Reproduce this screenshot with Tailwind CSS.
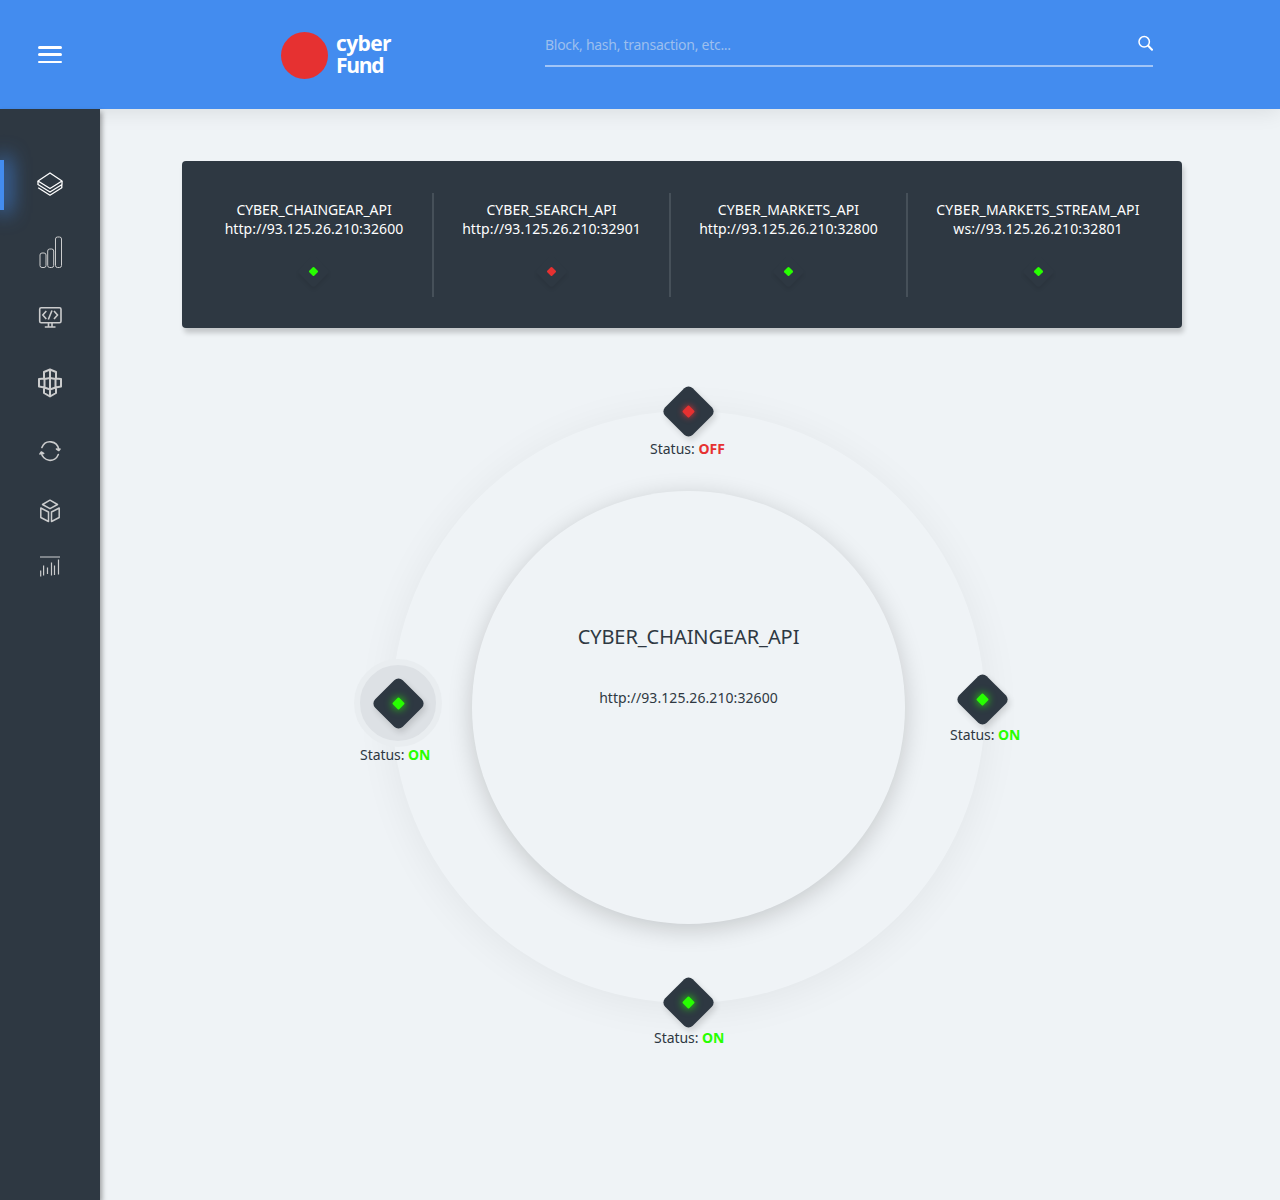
<!DOCTYPE html>
<html lang="en">
<head>
<meta charset="utf-8">
<title>cyber Fund</title>
<script src="https://cdn.jsdelivr.net/npm/@tailwindcss/browser@4"></script>
</head>
<body class="h-[1200px] overflow-hidden bg-[#eff3f6] font-['Noto_Sans',sans-serif] text-sm leading-[19px] text-[#2e3842]">
<header class="relative z-10 flex h-[109px] bg-[#438cef] shadow-[0_3px_20px_rgba(0,0,0,0.09)]">
  <button class="mt-[46px] ml-[38px] flex h-[17px] w-6 flex-col justify-between" aria-label="Menu">
    <span class="h-[2.5px] w-6 rounded-full bg-white"></span>
    <span class="h-[2.5px] w-6 rounded-full bg-white"></span>
    <span class="h-[2.5px] w-6 rounded-full bg-white"></span>
  </button>
  <a class="ml-[219px] flex w-[120px] pt-8">
    <span class="size-[47px] shrink-0 rounded-full bg-[#e63131]"></span>
    <span class="ml-2 font-['Open_Sans',sans-serif] text-[21px] leading-[22px] font-bold text-white"><span class="block tracking-[-0.6px]">cyber</span><span class="block tracking-[-1.3px]">Fund</span></span>
  </a>
  <div class="ml-36 flex h-[67px] w-[608px] justify-between border-b-2 border-[#a1c5f7] pt-[35px] text-[#9cbfee]">
    <span class="tracking-[-0.27px]">Block, hash, transaction, etc...</span>
    <svg class="mr-[-1px] size-4" viewBox="0 0 16 16" fill="none" stroke="white" stroke-linecap="round"><circle cx="6.200" cy="6.800" r="5.200" stroke-width="1.500"/><path d="M10.200 10.800 14 14.800" stroke-width="2"/></svg>
  </div>
</header>
<div class="flex h-[1091px]">
  <nav class="relative z-20 flex w-[100px] shrink-0 flex-col items-center bg-[#2e3842] text-[#cbcccd] shadow-[2px_3px_5px_rgba(0,0,0,0.35)]">
    <div class="mt-[51px] flex h-[50px] w-full items-center justify-center">
      <span class="absolute left-0 h-[50px] w-1 bg-[#438cef] shadow-[2px_0_20px_3px_rgba(67,140,239,0.9)]"></span>
      <svg class="mt-[-3px] h-6 w-[26px]" viewBox="0 0 26 24" fill="none" stroke="#fff" stroke-width="1.300" stroke-linejoin="round"><path d="M13 1 25 9 13 16.500 1 9Z"/><path d="M1 9v3.500l12 7.500 12-7.500V9M1.200 15.800 13 23.200 24.800 15.800V12.500M1 12l0 1"/></svg>
    </div>
    <svg class="mt-[25px] h-[34px] w-6" viewBox="-0.5 0 24 34" fill="none" stroke="currentColor"><rect x="1.500" y="18" width="6" height="14.500" rx="2"/><rect x="9.200" y="14" width="6" height="18.500" rx="2"/><rect x="17" y="2" width="6" height="30.500" rx="2"/></svg>
    <svg class="mt-[37px] h-[23px] w-6" viewBox="0 0 24 23" fill="none" stroke="currentColor" stroke-width="1.600"><rect x="1.700" y="1.700" width="21.300" height="15" rx="1.500"/><path d="M8.300 5 4.800 9l3.500 4M16 5l3.500 4-3.500 4M14 4.500 10.300 13.500M10.500 17v3.700M14 17v3.700M6.800 21h10.700"/></svg>
    <svg class="mt-[39px] h-[30px] w-[26px]" viewBox="0 0 26 30" fill="none" stroke="currentColor" stroke-width="2" stroke-linejoin="round"><path d="M7 10V4l6-2.500L19 4v6M13 2v19.500M7 20v5l6 3.500 6-3.500v-5M13 10 7.500 11v8.500l5.500 2 5.500-2V11ZM7.500 10.500 2 11v7.500l5.500 1M18.500 10.500 24 11v7.500l-5.500 1M13 21.500V28"/></svg>
    <svg class="mt-[42px] h-[22px] w-[22px]" viewBox="0 0 22 22" fill="none" stroke="currentColor" stroke-width="1.600" stroke-linecap="round" stroke-linejoin="round"><path d="M2.900 7.500A8.900 9.500 0 0 1 19.800 9.500M17.500 9l2.300 1.500L21 9M19.300 14.500A8.900 9.500 0 0 1 2.300 12.500M1 14l1.300-2 2.300 1.500"/></svg>
    <svg class="mt-[37px] h-6 w-[22px]" viewBox="0 0 22 24" fill="none" stroke="currentColor" stroke-width="1.500" stroke-linejoin="round"><path d="M11 1.200 18.500 5.500 11 9.700 3.500 5.500ZM1.800 9 9.500 13v9.500L1.800 18.500ZM20.200 9 12.500 13v9.500l7.700-4Z"/></svg>
    <svg class="mt-8 h-[22px] w-[22px]" viewBox="0 0 22 22" fill="none" stroke="currentColor"><path d="M1 2h20" stroke-width="1.700" stroke="#8d9398"/><path d="M1.700 15.500v6M4.600 10.500v10M8.500 12.500v6.500M12.500 7.500v13M15.500 10.500v9.500M19.500 4.500v15" stroke-width="1.200"/></svg>
  </nav>
  <main class="relative flex-1">
    <section class="mx-[82px] mt-[52px] flex h-[167px] w-[1000px] rounded-[4px] bg-[#2e3842] px-[14px] pt-8 text-center text-white shadow-[2px_5px_5px_rgba(0,0,0,0.18)]">
      <div class="flex h-[104px] w-[238px] flex-col items-center border-r-2 border-[#465059] pt-[7px]">
        <span class="tracking-[-0.05px]">CYBER_CHAINGEAR_API</span>
        <span class="tracking-[0.08px]">http://93.125.26.210:32600</span>
        <span class="mt-[22px] mr-px flex size-[23px] rotate-45 items-center justify-center rounded-[3px] shadow-[2px_2px_4px_rgba(0,0,0,0.08)]"><i class="size-[7px] rounded-[1px] bg-[#27ff00]"></i></span>
      </div>
      <div class="flex h-[104px] w-[237px] flex-col items-center border-r-2 border-[#465059] pt-[7px]">
        <span class="tracking-[0.05px]">CYBER_SEARCH_API</span>
        <span class="tracking-[0.08px]">http://93.125.26.210:32901</span>
        <span class="mt-[22px] flex size-[23px] rotate-45 items-center justify-center rounded-[3px] shadow-[2px_2px_4px_rgba(0,0,0,0.08)]"><i class="size-[7px] rounded-[1px] bg-[#e63131]"></i></span>
      </div>
      <div class="flex h-[104px] w-[237px] flex-col items-center border-r-2 border-[#465059] pt-[7px]">
        <span class="tracking-[0.13px]">CYBER_MARKETS_API</span>
        <span class="tracking-[0.08px]">http://93.125.26.210:32800</span>
        <span class="mt-[22px] flex size-[23px] rotate-45 items-center justify-center rounded-[3px] shadow-[2px_2px_4px_rgba(0,0,0,0.08)]"><i class="size-[7px] rounded-[1px] bg-[#27ff00]"></i></span>
      </div>
      <div class="flex h-[104px] w-[260px] flex-col items-center pt-[7px]">
        <span class="tracking-[0.18px]">CYBER_MARKETS_STREAM_API</span>
        <span class="tracking-[0.1px]">ws://93.125.26.210:32801</span>
        <span class="mt-[22px] flex size-[23px] rotate-45 items-center justify-center rounded-[3px] shadow-[2px_2px_4px_rgba(0,0,0,0.08)]"><i class="size-[7px] rounded-[1px] bg-[#27ff00]"></i></span>
      </div>
    </section>
    <!-- Ring diagram: nodes are placed around the circle -->
    <section class="relative mt-[83px] ml-[292px] flex h-[592px] w-[593px] items-center justify-center rounded-full shadow-[0_5px_40px_rgba(0,0,0,0.06)]">
      <div class="flex size-[433px] flex-col items-center rounded-full pt-[133px] shadow-[0_5px_25px_rgba(0,0,0,0.18)]">
        <h1 class="text-[20px] leading-[26px] tracking-[-0.07px]">CYBER_CHAINGEAR_API</h1>
        <p class="mt-[38px] tracking-[0.08px]">http://93.125.26.210:32600</p>
      </div>
      <div class="absolute top-[-19px] left-[277px] flex size-[39px] rotate-45 items-center justify-center rounded-[6px] bg-[#2e3842] shadow-[4px_1px_6px_rgba(0,0,0,0.14)]"><i class="size-[9px] rounded-[1px] bg-[#e63131] shadow-[0_0_6px_#e63131]"></i></div>
      <p class="absolute top-[28px] left-[258px] whitespace-nowrap">Status: <b class="text-[#e63131]">OFF</b></p>
      <div class="absolute top-[269px] left-[571px] flex size-[39px] rotate-45 items-center justify-center rounded-[6px] bg-[#2e3842] shadow-[4px_1px_6px_rgba(0,0,0,0.14)]"><i class="size-[9px] rounded-[1px] bg-[#27ff00] shadow-[0_0_9px_#27ff00]"></i></div>
      <p class="absolute top-[314px] left-[558px] tracking-[-0.05px] whitespace-nowrap">Status: <b class="text-[#27ff00]">ON</b></p>
      <div class="absolute top-[572px] left-[277px] flex size-[39px] rotate-45 items-center justify-center rounded-[6px] bg-[#2e3842] shadow-[4px_1px_6px_rgba(0,0,0,0.14)]"><i class="size-[9px] rounded-[1px] bg-[#27ff00] shadow-[0_0_9px_#27ff00]"></i></div>
      <p class="absolute top-[617px] left-[262px] tracking-[-0.05px] whitespace-nowrap">Status: <b class="text-[#27ff00]">ON</b></p>
      <div class="absolute top-[248px] left-[-38px] flex size-[88px] items-center justify-center rounded-full border-6 border-[#e9edf0] bg-[#dde1e5] pt-px pl-px"><div class="flex size-[39px] rotate-45 items-center justify-center rounded-[6px] bg-[#2e3842] shadow-[4px_1px_6px_rgba(0,0,0,0.14)]"><i class="size-[9px] rounded-[1px] bg-[#27ff00] shadow-[0_0_9px_#27ff00]"></i></div></div>
      <p class="absolute top-[334px] left-[-32px] tracking-[-0.05px] whitespace-nowrap">Status: <b class="text-[#27ff00]">ON</b></p>
    </section>
  </main>
</div>
</body>
</html>
